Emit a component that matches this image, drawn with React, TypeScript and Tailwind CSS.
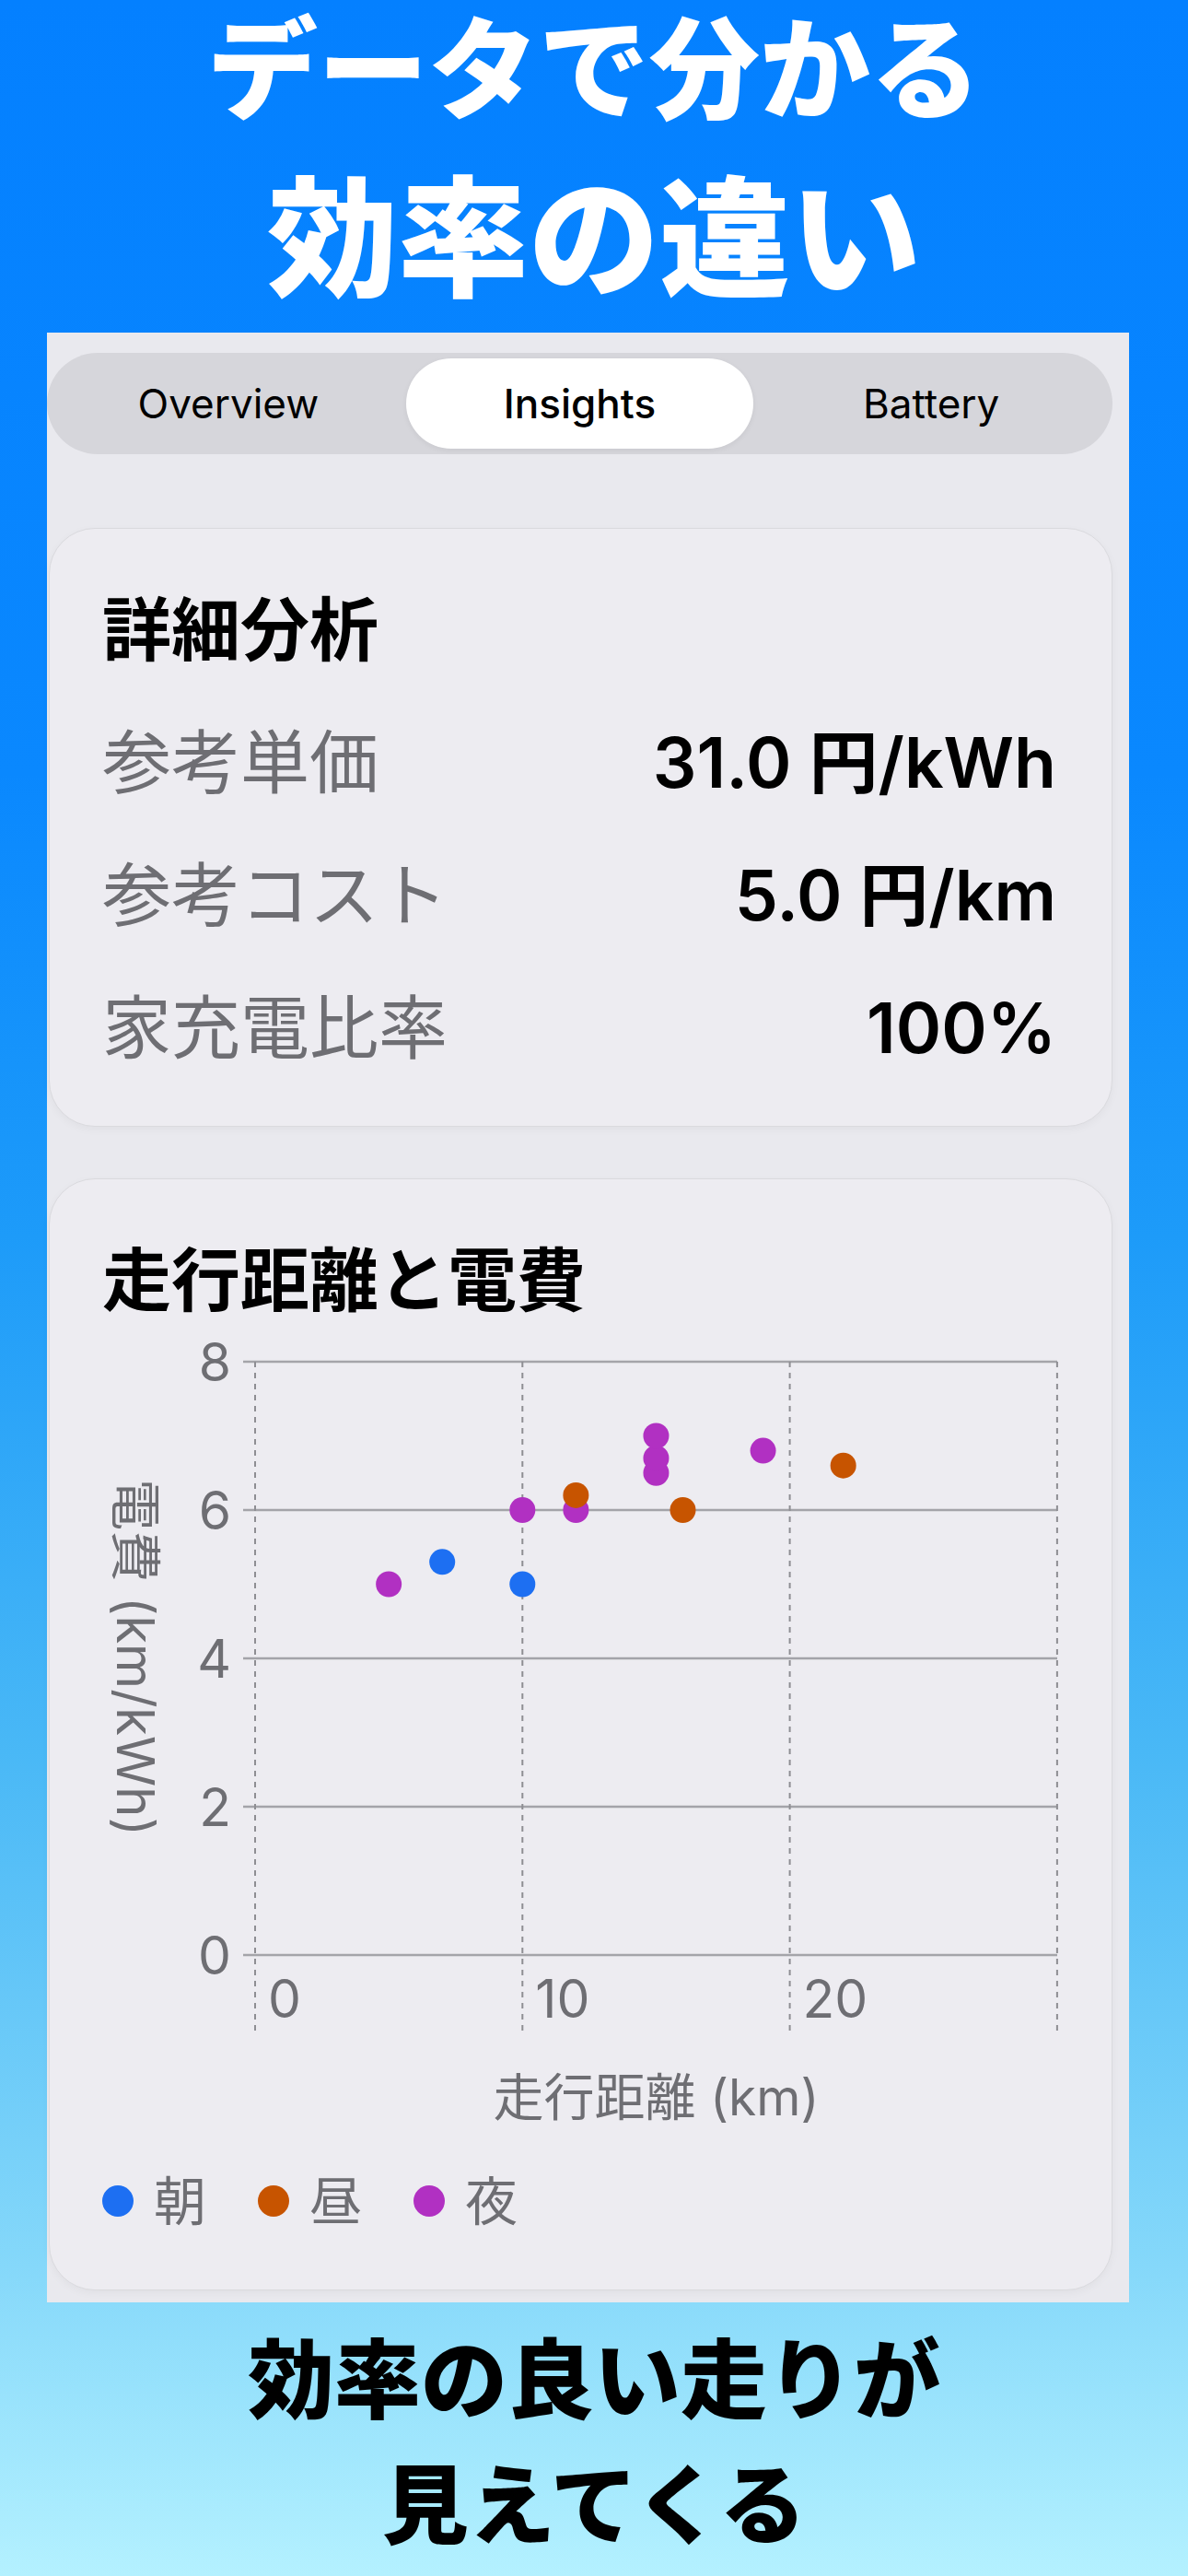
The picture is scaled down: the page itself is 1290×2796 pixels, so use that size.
import React from 'react'

type Slot = 'morning' | 'noon' | 'night'

const slotColor: Record<Slot, string> = {
  morning: '#1d6ff2',
  noon: '#c75400',
  night: '#b130c2',
}

const trips: { km: number; eff: number; slot: Slot }[] = [
  { km: 5, eff: 5.0, slot: 'night' },
  { km: 7, eff: 5.3, slot: 'morning' },
  { km: 10, eff: 5.0, slot: 'morning' },
  { km: 10, eff: 6.0, slot: 'night' },
  { km: 12, eff: 6.0, slot: 'night' },
  { km: 12, eff: 6.2, slot: 'noon' },
  { km: 15, eff: 6.5, slot: 'night' },
  { km: 15, eff: 6.7, slot: 'night' },
  { km: 15, eff: 7.0, slot: 'night' },
  { km: 16, eff: 6.0, slot: 'noon' },
  { km: 19, eff: 6.8, slot: 'night' },
  { km: 22, eff: 6.6, slot: 'noon' },
]

const stats = [
  { label: '参考単価', value: '31.0 円/kWh' },
  { label: '参考コスト', value: '5.0 円/km' },
  { label: '家充電比率', value: '100%' },
]

const tabs = ['Overview', 'Insights', 'Battery']

const legend: { label: string; slot: Slot }[] = [
  { label: '朝', slot: 'morning' },
  { label: '昼', slot: 'noon' },
  { label: '夜', slot: 'night' },
]

// plot geometry (svg units); the svg starts TOP px above the plot's reference line
const TOP = 40
const X0 = 223
const PER_KM = 29.03
const Y0 = 661 + TOP
const PER_UNIT = 80.5
const GRAY = '#6e6e73'
const FONT = "Inter, 'Noto Sans CJK JP', sans-serif"

const px = (km: number) => X0 + km * PER_KM
const py = (v: number) => Y0 - v * PER_UNIT

function SegmentedControl() {
  return (
    <div className="h-[110px] rounded-full bg-[#d6d6db] grid grid-cols-3 p-[6px]">
      {tabs.map((t) => (
        <div
          key={t}
          className={`flex items-center justify-center rounded-full text-[44px] text-black leading-none ${
            t === 'Insights'
              ? 'bg-white mx-[2px] font-medium shadow-[0_2px_6px_rgba(0,0,0,0.06)]'
              : 'font-normal'
          }`}
        >
          {t}
        </div>
      ))}
    </div>
  )
}

function ScatterChart() {
  const ticksY = [0, 2, 4, 6, 8]
  const ticksX = [0, 10, 20, 30]
  return (
    <svg width={1154} height={765 + TOP} className="block -mt-[40px]">
      {ticksY.map((v) => (
        <line key={v} x1={210} x2={1094} y1={py(v)} y2={py(v)} stroke="#a4a4a9" strokeWidth={2.5} />
      ))}
      {ticksX.map((k) => (
        <line
          key={k}
          x1={px(k)}
          x2={px(k)}
          y1={py(8)}
          y2={744 + TOP}
          stroke="#8e8e93"
          strokeWidth={2}
          strokeDasharray="6 6"
        />
      ))}
      {ticksY.map((v) => (
        <text key={v} x={197} y={py(v) + 21} textAnchor="end" fontSize={57} fill={GRAY} fontFamily={FONT}>
          {v}
        </text>
      ))}
      {ticksX.slice(0, 3).map((k) => (
        <text key={k} x={px(k) + 14} y={729 + TOP} fontSize={57} fill={GRAY} fontFamily={FONT}>
          {k}
        </text>
      ))}
      <text
        transform={`translate(93,${338 + TOP}) rotate(90)`}
        textAnchor="middle"
        dominantBaseline="central"
        fontSize={56}
        fill={GRAY}
        fontFamily={FONT}
      >
        電費 (km/kWh)
      </text>
      {trips.map((t, i) => (
        <circle key={i} cx={px(t.km)} cy={py(t.eff)} r={14} fill={slotColor[t.slot]} />
      ))}
    </svg>
  )
}

export default function App() {
  return (
    <div className="w-[1290px] h-[2796px] bg-[linear-gradient(180deg,#0480ff_0%,#0a88fe_30%,#1d9bf9_48%,#49b8f6_68%,#85d8fa_88%,#b4f1ff_100%)] font-['Inter','Noto_Sans_CJK_JP',sans-serif]">
      <h1 className="flex flex-col items-center text-white font-black leading-none font-['Noto_Sans_CJK_JP',sans-serif]">
        <span className="h-[136px] flex items-center text-[120px]">データで分かる</span>
        <span className="h-[225px] flex items-center text-[142px]">効率の違い</span>
      </h1>

      <div className="ml-[51px] w-[1175px] h-[2138px] bg-[#e9e9ee] pt-[22px] pr-[18px]">
        <SegmentedControl />

        {/* summary card */}
        <div className="mt-[80px] ml-[2px] h-[650px] rounded-[50px] bg-[#edecf1] border border-[#dadade] shadow-[0_3px_10px_rgba(0,0,0,0.04)] pt-[37px] pl-[57px] pr-[60px] flex flex-col">
          <div className="h-[144px] flex items-center text-[75px] font-bold text-black leading-none">詳細分析</div>
          {stats.map((s) => (
            <div key={s.label} className="h-[144px] flex items-center justify-between leading-none">
              <span className="text-[75px] text-[#6e6e73]">{s.label}</span>
              <span className="text-[75px] font-semibold text-black">{s.value}</span>
            </div>
          ))}
        </div>

        {/* distance vs efficiency card */}
        <div className="mt-[56px] ml-[2px] h-[1207px] rounded-[50px] bg-[#edecf1] border border-[#dadade] shadow-[0_3px_10px_rgba(0,0,0,0.04)] pt-[37px] flex flex-col">
          <div className="h-[144px] pl-[57px] flex items-center text-[75px] font-bold text-black leading-none">
            走行距離と電費
          </div>
          <ScatterChart />
          <div className="h-[100px] ml-[223px] w-[871px] flex items-center justify-center text-[55px] text-[#6e6e73] leading-none">
            走行距離 (km)
          </div>
          <div className="h-[126px] pl-[57px] flex items-center leading-none">
            {legend.map((l) => (
              <div key={l.slot} className="flex items-center mr-[56px]">
                <span className="w-[34px] h-[34px] rounded-full" style={{ backgroundColor: slotColor[l.slot] }} />
                <span className="ml-[22px] text-[57px] text-[#6e6e73]">{l.label}</span>
              </div>
            ))}
          </div>
        </div>
      </div>

      <p className="flex flex-col items-center text-black font-black leading-none font-['Noto_Sans_CJK_JP',sans-serif]">
        <span className="h-[156px] flex items-end pb-[31px] text-[94px]">効率の良い走りが</span>
        <span className="h-[116px] flex items-center text-[94px]">見えてくる</span>
      </p>
    </div>
  )
}
